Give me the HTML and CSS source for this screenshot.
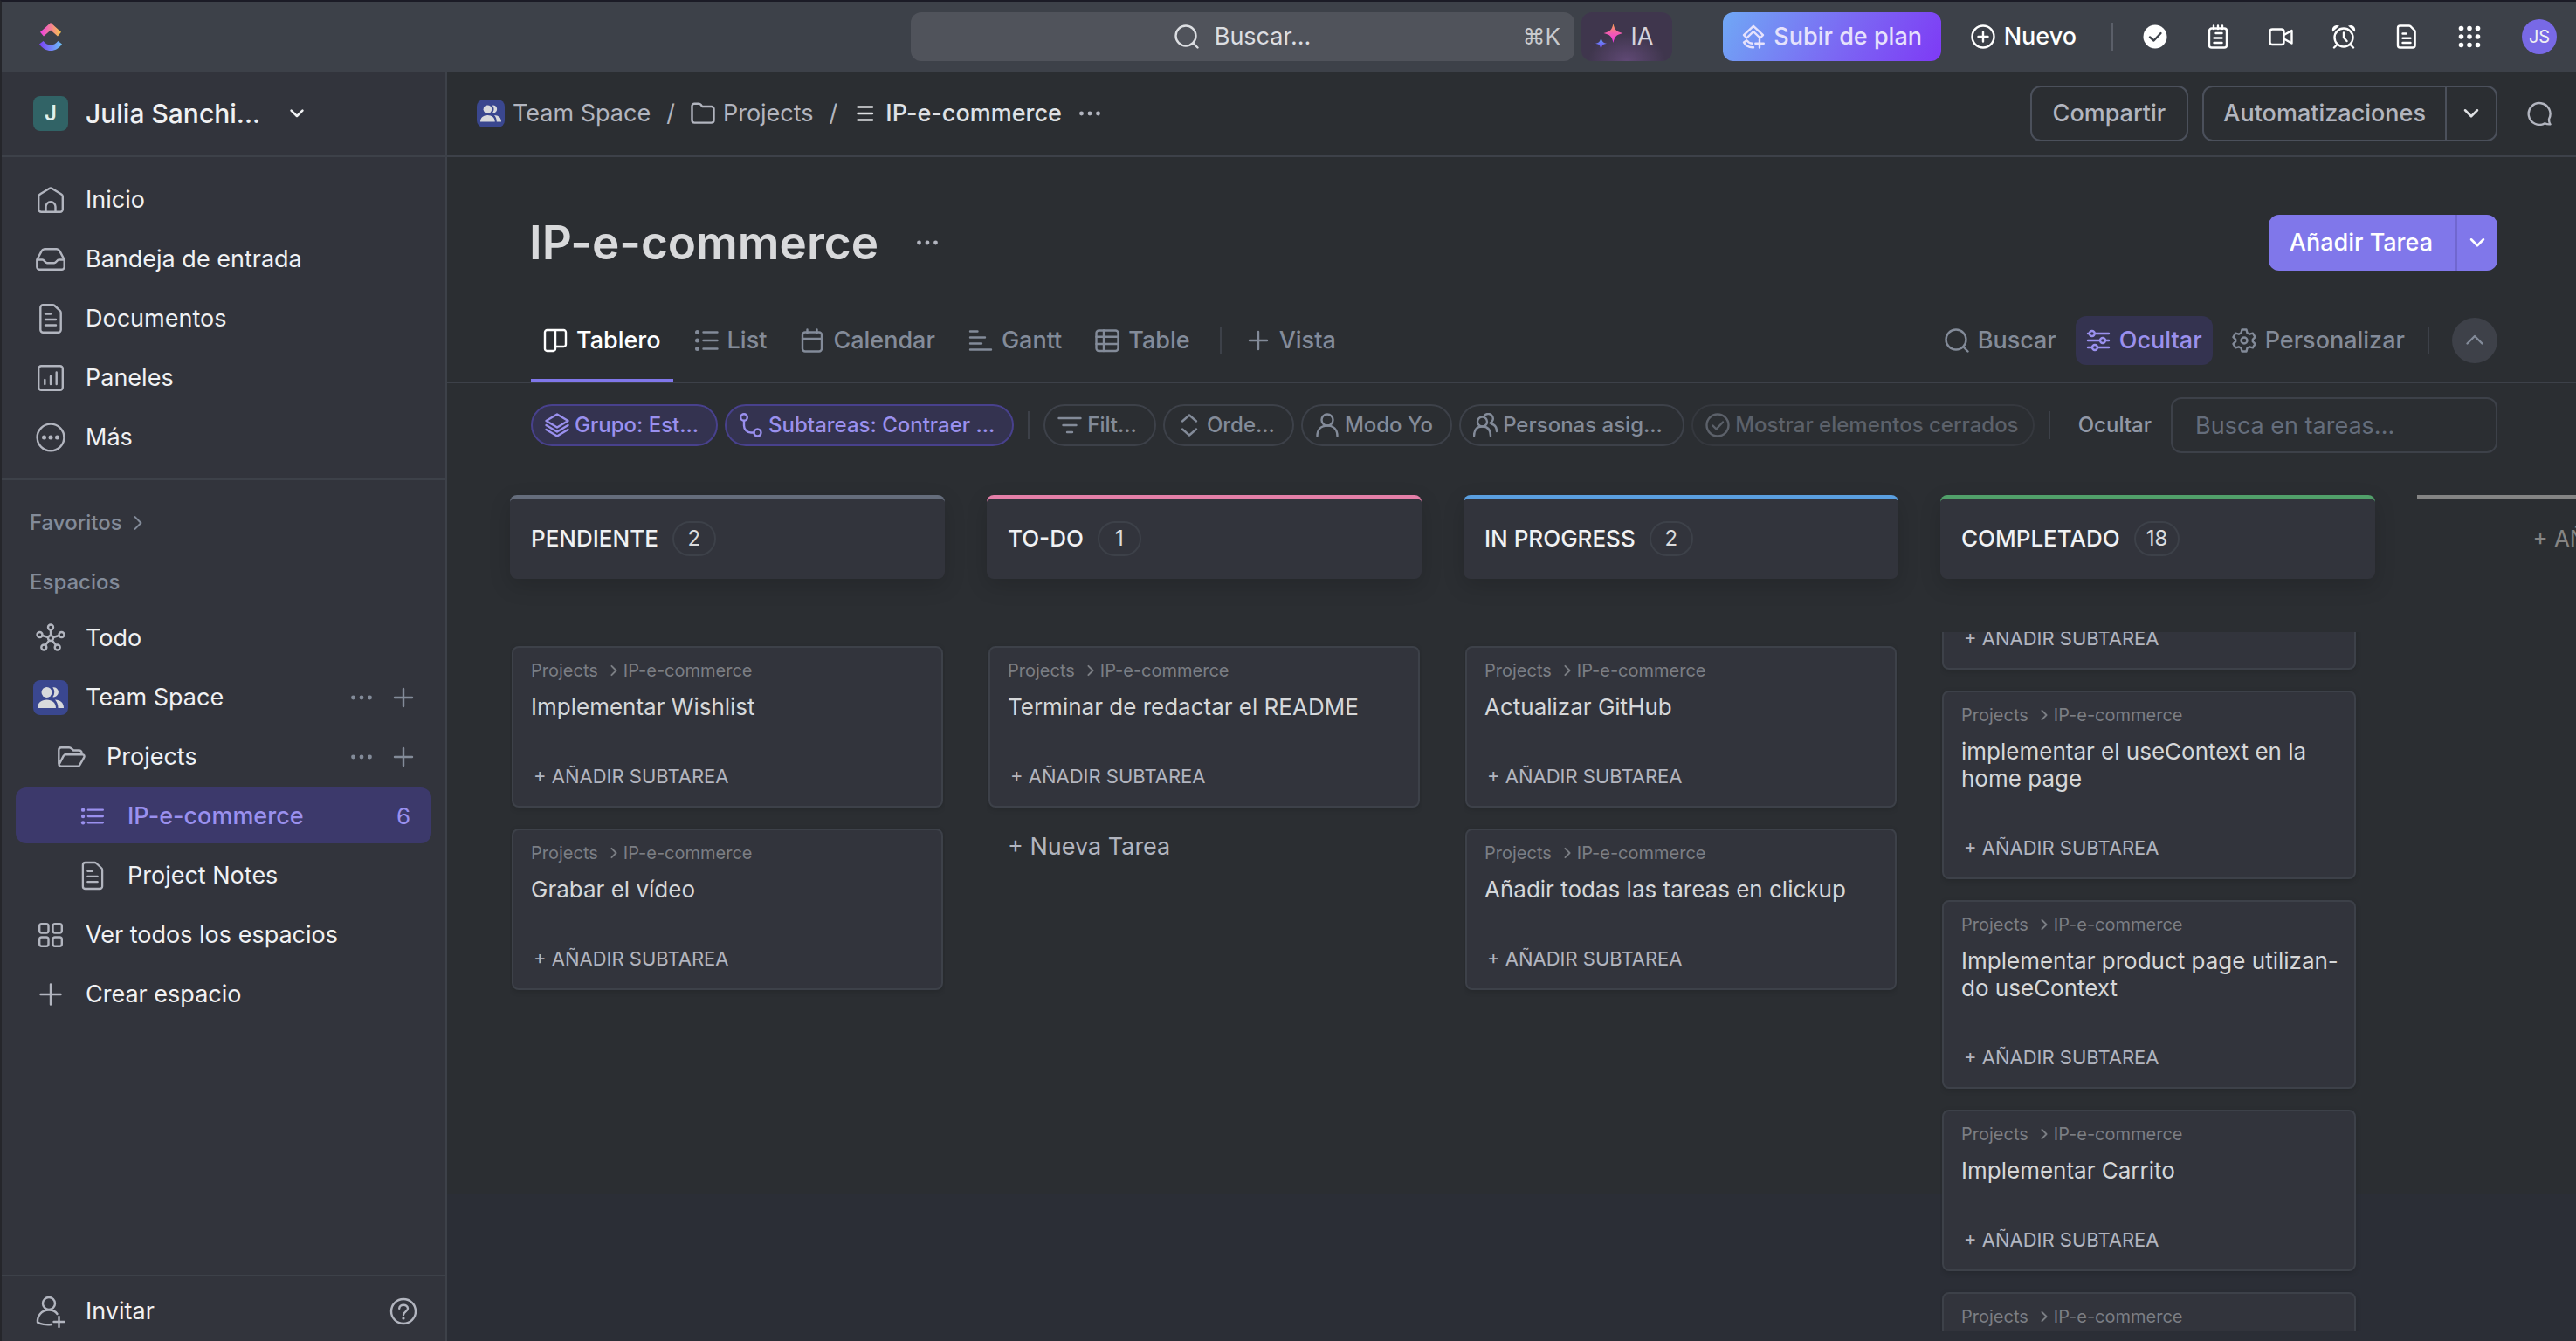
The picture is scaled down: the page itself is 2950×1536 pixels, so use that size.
FILE: index.html
```html
<!DOCTYPE html>
<html lang="es">
<head>
<meta charset="utf-8">
<meta name="viewport" content="width=device-width, initial-scale=1">
<title>IP-e-commerce</title>
<link rel="stylesheet" href="styles.css">
</head>
<body>
<svg class="sprite" aria-hidden="true">
  <defs>
    <linearGradient id="warm-flat" x1="0" y1="0" x2="1" y2="0"><stop offset="0" stop-color="#ee3ee4"/><stop offset=".55" stop-color="#f5868c"/><stop offset="1" stop-color="#f7ca4a"/></linearGradient>
    <linearGradient id="cool" x1="0" y1="0" x2="1" y2="0"><stop offset="0" stop-color="#7b3ff5"/><stop offset="1" stop-color="#6cc3f8"/></linearGradient>
    <linearGradient id="star-warm" x1="0" y1="1" x2="0" y2="0"><stop offset="0" stop-color="#ee35e6"/><stop offset=".5" stop-color="#f25cb0"/><stop offset="1" stop-color="#fba54a"/></linearGradient>
    <linearGradient id="star-cool" x1="0" y1="1" x2="0" y2="0"><stop offset="0" stop-color="#7b3ff5"/><stop offset="1" stop-color="#5fa8f5"/></linearGradient>
  </defs>
  <symbol id="i-home" viewBox="0 0 40 40"><path d="M6.2 16.2a3 3 0 0 1 1.5-2.6L18.4 6.9a3 3 0 0 1 3.2 0l10.7 6.7a3 3 0 0 1 1.5 2.6v14.6a3 3 0 0 1-3 3H9.2a3 3 0 0 1-3-3zM14.5 33.8v-6a5.5 5.5 0 0 1 11 0v6"/></symbol>
  <symbol id="i-inbox" viewBox="0 0 40 40"><path d="M4.3 20.5 9.6 10.6A4 4 0 0 1 13 8.2h14a4 4 0 0 1 3.4 2.4l5.3 9.9v8.3a3 3 0 0 1-3 3H7.3a3 3 0 0 1-3-3zM4.3 20.5h6.2c2.4 0 2.8 3.8 5.4 3.8h8.2c2.6 0 3-3.8 5.4-3.8h6.2"/></symbol>
  <symbol id="i-doc" viewBox="0 0 40 40"><path d="M11.3 4.2h11.1a3 3 0 0 1 2 .8l6.3 5.8a3 3 0 0 1 1 2.2v19.8a3 3 0 0 1-3 3H11.3a3 3 0 0 1-3-3V7.2a3 3 0 0 1 3-3zM14 14.5h6M14 21h12M14 27.5h12"/></symbol>
  <symbol id="i-panels" viewBox="0 0 40 40"><rect x="6.2" y="6.2" width="27.6" height="27.6" rx="3"/><path d="M13.3 22v5M20 18v9M26.7 13.5V27"/></symbol>
  <symbol id="i-more" viewBox="0 0 40 40"><circle cx="20" cy="20" r="15.4"/><g class="solid"><circle cx="12.5" cy="20" r="2.5"/><circle cx="20" cy="20" r="2.5"/><circle cx="27.5" cy="20" r="2.5"/></g></symbol>
  <symbol id="i-hub" viewBox="0 0 40 40"><circle cx="20" cy="20" r="3"/><circle cx="20" cy="7.5" r="3"/><circle cx="7.5" cy="16" r="3"/><circle cx="32.5" cy="16" r="3"/><circle cx="12.3" cy="30.5" r="3"/><circle cx="27.7" cy="30.5" r="3"/><path d="M20 10.5V17M10.4 17l6.700 2M29.6 17l-6.700 2M14 28l4.300-5.500M26 28l-4.300-5.500"/></symbol>
  <symbol id="i-people" viewBox="0 0 40 40"><circle cx="15.5" cy="14" r="6"/><path d="M5 32c0-6 4.500-9.500 10.500-9.500S26 26 26 32zM22.300 8.300a5.600 5.600 0 1 1 0 11 8.800 8.800 0 0 0 0-11zM25 22.500c6 0 10 3.500 10 9.500h-6.500c0-4-1.300-7-3.500-9.500z"/></symbol>
  <symbol id="i-folder-open" viewBox="0 0 40 40"><path d="M5.300 27.500V12a2.800 2.800 0 0 1 2.800-2.800h9c1.200 0 2 .5 3 1.500l2 1.800h6.500a3 3 0 0 1 3 3v1.700M5.500 28.800l5.200-9.900a3 3 0 0 1 2.700-1.700h19c1.600 0 2.700 1.700 1.900 3.100l-5 8.900a3 3 0 0 1-2.600 1.600H8.300a2.800 2.800 0 0 1-2.800-2z"/></symbol>
  <symbol id="i-list" viewBox="0 0 40 40"><path d="M14.5 12.300h18M14.5 20h18M14.5 27.700h18"/><g class="solid"><circle cx="8.500" cy="12.300" r="2.300"/><circle cx="8.500" cy="20" r="2.300"/><circle cx="8.500" cy="27.700" r="2.300"/></g></symbol>
  <symbol id="i-grid" viewBox="0 0 40 40"><rect x="7.200" y="7.200" width="10.300" height="10.300" rx="2.500"/><rect x="22.500" y="7.200" width="10.300" height="10.300" rx="2.500"/><rect x="7.200" y="22.500" width="10.300" height="10.300" rx="2.500"/><rect x="22.500" y="22.500" width="10.300" height="10.300" rx="2.500"/></symbol>
  <symbol id="i-plus" viewBox="0 0 40 40"><path d="M20 8.500v23M8.500 20h23"/></symbol>
  <symbol id="i-plus-sm" viewBox="0 0 28 28"><path d="M14 4v20M4 14h20"/></symbol>
  <symbol id="i-dots" viewBox="0 0 28 28"><g class="solid"><circle cx="4.500" cy="14" r="2.400"/><circle cx="14" cy="14" r="2.400"/><circle cx="23.500" cy="14" r="2.400"/></g></symbol>
  <symbol id="i-invite" viewBox="0 0 40 40"><circle cx="18" cy="11" r="7"/><path d="M21 35c-6 .8-13.500-.3-16-2.500C4.500 26 9 18.500 18 18.500c4.500 0 7.500 1.500 9.500 4.500M29.500 26v12M23.500 32h12"/></symbol>
  <symbol id="i-help" viewBox="0 0 40 40"><circle cx="20" cy="20" r="14"/><path d="M15.200 16.800c0-5.500 9.800-5.500 9.800 0 0 3.400-5 3.700-5 7.200"/><circle class="solid" cx="20" cy="28" r="1.600"/></symbol>
  <symbol id="i-down" viewBox="0 0 28 28"><path d="m6.500 10 7.500 7.500 7.500-7.500"/></symbol>
  <symbol id="i-up" viewBox="0 0 28 28"><path d="m5.500 17.500 8.500-8.500 8.500 8.500"/></symbol>
  <symbol id="i-right" viewBox="0 0 28 28"><path d="m10 6 8 8-8 8"/></symbol>
  <symbol id="i-search" viewBox="0 0 28 28"><circle cx="13" cy="13" r="11.500"/><path d="m21.500 21.500 5 5"/></symbol>
  <symbol id="i-upgrade" viewBox="0 0 28 28"><path d="M3 12.200 14 1.800l11 10.400-3.300 3.300L14 8.200l-7.700 7.300zM14 26.200C9 26.500 5 24.200 3 20.500l3.300-2.300c1.300 2 3.500 3.300 6.200 3.600M21 17v9.500M16.300 21.700h9.500"/></symbol>
  <symbol id="i-plus-circle" viewBox="0 0 28 28"><circle cx="14" cy="14" r="12.500"/><path d="M14 8.500v11M8.500 14h11"/></symbol>
  <symbol id="i-done" viewBox="0 0 28 28"><circle class="solid" cx="14" cy="14" r="13.500"/><path class="cut" d="m8 14.500 4.500 4L20.500 10"/></symbol>
  <symbol id="i-notepad" viewBox="0 0 28 28"><rect x="4" y="4.500" width="20" height="22" rx="2.800"/><path d="M9 1.500V5M14 1.500V5M19 1.500V5M11.500 10h7M9.500 15.500h9M9.500 21h9"/></symbol>
  <symbol id="i-video" viewBox="0 0 28 28"><rect x="1.500" y="5.500" width="16" height="17.500" rx="2.800"/><path d="M18.500 11.500 26.500 7v14.500l-8-4.500"/></symbol>
  <symbol id="i-alarm" viewBox="0 0 28 28"><circle cx="14" cy="15" r="10.500"/><path d="M14 9.500v5.500l3.500 4M6 23.500l-3 3M22 23.500l3 3"/><path class="solid" d="M1.200 8.500C-.5 3 4-.500 9 1.500zM26.800 8.500C28.500 3 24-.500 19 1.500z"/></symbol>
  <symbol id="i-doc-sm" viewBox="0 0 28 28"><path d="M6.500 1.500h10.300a2.500 2.500 0 0 1 1.700.7l4.300 4.300a2.500 2.500 0 0 1 .8 1.800V24a2.500 2.500 0 0 1-2.500 2.500H6.500A2.500 2.500 0 0 1 4 24V4a2.500 2.500 0 0 1 2.500-2.500zM9.500 10.500h4M9.500 15.800h9M9.500 21h9"/></symbol>
  <symbol id="i-apps" viewBox="0 0 28 28"><g class="solid"><circle cx="4.500" cy="4.500" r="2.800"/><circle cx="14" cy="4.500" r="2.800"/><circle cx="23.500" cy="4.500" r="2.800"/><circle cx="4.500" cy="14" r="2.800"/><circle cx="14" cy="14" r="2.800"/><circle cx="23.500" cy="14" r="2.800"/><circle cx="4.500" cy="23.500" r="2.800"/><circle cx="14" cy="23.500" r="2.800"/><circle cx="23.500" cy="23.500" r="2.800"/></g></symbol>
  <symbol id="i-chat" viewBox="0 0 28 28"><path d="M26.500 26.300c-2.300.2-4.400-.2-6.200-1.100a12.400 12.400 0 1 1 4.800-5c-.3 2.300.2 4.300 1.400 6.100z"/></symbol>
  <symbol id="i-folder" viewBox="0 0 28 28"><path d="M1.500 5.500a2.800 2.800 0 0 1 2.800-2.800h5c1 0 1.600.4 2.200 1.100L13.200 6h10.500a2.800 2.800 0 0 1 2.800 2.800v13a2.800 2.800 0 0 1-2.800 2.800H4.300a2.800 2.800 0 0 1-2.800-2.800z"/></symbol>
  <symbol id="i-lines" viewBox="0 0 28 28"><path d="M5.500 6.500h16.500M5.500 14h16.500M5.500 21.500h16.500"/></symbol>
  <symbol id="i-board" viewBox="0 0 28 28"><path d="M4.500 2h19A2.500 2.500 0 0 1 26 4.500v14a2.500 2.500 0 0 1-2.500 2.500H14v2.500a2.500 2.500 0 0 1-2.500 2.500h-7A2.500 2.500 0 0 1 2 23.500v-19A2.500 2.500 0 0 1 4.500 2zM14 2v19"/></symbol>
  <symbol id="i-list-lg" viewBox="0 0 28 28"><path d="M10.500 4.500h16M10.500 14h16M10.500 23.500h16"/><g class="solid"><circle cx="3.500" cy="4.500" r="2.500"/><circle cx="3.500" cy="14" r="2.500"/><circle cx="3.500" cy="23.500" r="2.500"/></g></symbol>
  <symbol id="i-calendar" viewBox="0 0 28 28"><rect x="3" y="4.500" width="22" height="22" rx="3"/><path d="M3 12h22M8.500 1.500v4M19.500 1.500v4"/></symbol>
  <symbol id="i-gantt" viewBox="0 0 28 28"><path d="M2 3.500h8.500M2 10.500h17M2 17.500h13M2 24.500h24"/></symbol>
  <symbol id="i-table" viewBox="0 0 28 28"><rect x="1.500" y="2.500" width="25" height="23.500" rx="3"/><path d="M1.500 9.800h25M1.500 18h25M10 2.500V26"/></symbol>
  <symbol id="i-tune" viewBox="0 0 28 28"><path d="M11 6h15M2 6h1.500M2 14h13M23 14h3M2 22h4.500M14 22h12"/><circle cx="6.800" cy="6" r="3"/><circle cx="19" cy="14" r="3"/><circle cx="10" cy="22" r="3"/></symbol>
  <symbol id="i-gear" viewBox="0 0 28 28"><path d="M11.500 1.500h5l1 3.700 2.700 1.500 3.700-1 2.600 4.400-2.700 2.700v2.400l2.700 2.700-2.600 4.400-3.700-1-2.700 1.500-1 3.700h-5l-1-3.700-2.700-1.500-3.700 1-2.600-4.400 2.700-2.700v-2.400L1.500 10.100l2.600-4.400 3.700 1 2.700-1.500z"/><circle cx="14" cy="14" r="3.500"/></symbol>
  <symbol id="i-layers" viewBox="0 0 28 28"><path d="M14 1.500 26.500 9 14 16.500 1.500 9zM1.500 14 14 21.500 26.500 14M1.500 19 14 26.500 26.500 19"/></symbol>
  <symbol id="i-branch" viewBox="0 0 28 28"><circle cx="6" cy="5" r="3.800"/><circle cx="21.500" cy="22.500" r="4"/><path d="M6 9v5.500a8 8 0 0 0 8 8h3.500"/></symbol>
  <symbol id="i-filter" viewBox="0 0 28 28"><path d="M1.500 6h25M6.500 14h15M11 22h6"/></symbol>
  <symbol id="i-sort" viewBox="0 0 28 28"><path d="m6 9.500 8-7 8 7M6 18.500l8 7 8-7"/></symbol>
  <symbol id="i-user" viewBox="0 0 28 28"><circle cx="14" cy="8" r="6.500"/><path d="M2.500 26.500c0-7.500 4.500-12 11.500-12s11.500 4.500 11.500 12"/></symbol>
  <symbol id="i-users" viewBox="0 0 28 28"><circle cx="10.500" cy="10" r="5.500"/><path d="M1 26.500c0-7 3.500-11 9.500-11s9.500 4 9.500 11M13 3a5.500 5.500 0 1 1 6.500 8.500M21 12.500c4 1 6 3.800 6 8.500"/></symbol>
  <symbol id="i-check-circle" viewBox="0 0 28 28"><circle cx="14" cy="14" r="12.500"/><path d="m8.500 14.500 4 4 7.500-8"/></symbol>
</svg>

<div class="app">
  <header class="topbar">
    <a class="logo" href="#" aria-label="ClickUp"><svg viewBox="0 0 26 32"><path fill="url(#warm-flat)" d="M13 0 1 10.800l4 4.700 8-7 8 7 4-4.700z"/><path fill="url(#cool)" d="M0 24.500 4.600 21c4.900 6 11.900 6 16.800 0l4.600 3.500c-7 10-19 10-26 0z"/></svg></a>
    <div class="topbar-center">
      <button class="search" type="button"><span class="search-label"><svg class="icon"><use href="#i-search"/></svg>Buscar...</span><kbd>⌘K</kbd></button>
      <button class="ai" type="button"><svg viewBox="0 0 32 32"><path fill="url(#star-warm)" d="M20.500 1c1.600 7.200 3.400 9.400 11 11-7.600 1.600-9.400 3.800-11 11-1.600-7.200-3.400-9.400-11-11 7.600-1.600 9.400-3.800 11-11z"/><path fill="url(#star-cool)" d="M6.500 17c1 4.500 2 5.800 6.500 6.800-4.500 1-5.500 2.200-6.500 6.700-1-4.500-2-5.700-6.500-6.700 4.500-1 5.500-2.300 6.500-6.800z"/></svg>IA</button>
    </div>
    <div class="topbar-end">
      <button class="upgrade" type="button"><svg class="icon"><use href="#i-upgrade"/></svg>Subir de plan</button>
      <button class="new" type="button"><svg class="icon"><use href="#i-plus-circle"/></svg>Nuevo</button>
      <span class="rule"></span>
      <nav class="tools" aria-label="Herramientas">
        <button type="button" aria-label="Hecho"><svg class="icon"><use href="#i-done"/></svg></button>
        <button type="button" aria-label="Bloc de notas"><svg class="icon"><use href="#i-notepad"/></svg></button>
        <button type="button" aria-label="Vídeo"><svg class="icon"><use href="#i-video"/></svg></button>
        <button type="button" aria-label="Recordatorio"><svg class="icon"><use href="#i-alarm"/></svg></button>
        <button type="button" aria-label="Documento"><svg class="icon"><use href="#i-doc-sm"/></svg></button>
        <button type="button" aria-label="Aplicaciones"><svg class="icon"><use href="#i-apps"/></svg></button>
      </nav>
      <button class="avatar" type="button">JS</button>
    </div>
  </header>

  <aside class="sidebar">
    <button class="workspace" type="button"><span class="badge">J</span><span>Julia Sanchi...</span><svg class="icon"><use href="#i-down"/></svg></button>
    <nav class="group" aria-label="Principal">
      <a class="row" href="#"><svg class="glyph"><use href="#i-home"/></svg>Inicio</a>
      <a class="row" href="#"><svg class="glyph"><use href="#i-inbox"/></svg>Bandeja de entrada</a>
      <a class="row" href="#"><svg class="glyph"><use href="#i-doc"/></svg>Documentos</a>
      <a class="row" href="#"><svg class="glyph"><use href="#i-panels"/></svg>Paneles</a>
      <a class="row" href="#"><svg class="glyph"><use href="#i-more"/></svg>Más</a>
    </nav>
    <nav class="group spaces" aria-label="Espacios">
      <button class="heading" type="button">Favoritos<svg class="icon"><use href="#i-right"/></svg></button>
      <div class="tree">
        <h2 class="heading">Espacios</h2>
        <a class="row" href="#"><svg class="glyph"><use href="#i-hub"/></svg>Todo</a>
        <div class="row"><svg class="team"><use href="#i-people"/></svg><a class="name" href="#">Team Space</a><button type="button" aria-label="Opciones de Team Space"><svg class="icon"><use href="#i-dots"/></svg></button><button type="button" aria-label="Añadir a Team Space"><svg class="icon"><use href="#i-plus-sm"/></svg></button></div>
        <div class="row level-1"><svg class="glyph"><use href="#i-folder-open"/></svg><a class="name" href="#">Projects</a><button type="button" aria-label="Opciones de Projects"><svg class="icon"><use href="#i-dots"/></svg></button><button type="button" aria-label="Añadir a Projects"><svg class="icon"><use href="#i-plus-sm"/></svg></button></div>
        <a class="row level-2 current" href="#"><svg class="glyph"><use href="#i-list"/></svg><span class="name">IP-e-commerce</span><span class="count">6</span></a>
        <a class="row level-2" href="#"><svg class="glyph"><use href="#i-doc"/></svg>Project Notes</a>
        <a class="row" href="#"><svg class="glyph"><use href="#i-grid"/></svg>Ver todos los espacios</a>
        <a class="row" href="#"><svg class="glyph"><use href="#i-plus"/></svg>Crear espacio</a>
      </div>
    </nav>
    <footer class="sidebar-foot">
      <div class="row"><svg class="glyph"><use href="#i-invite"/></svg><a class="name" href="#">Invitar</a><button type="button" aria-label="Ayuda"><svg class="glyph"><use href="#i-help"/></svg></button></div>
    </footer>
  </aside>

  <main class="main">
    <div class="crumb-bar">
      <nav class="crumbs" aria-label="Ruta">
        <a href="#"><svg class="team"><use href="#i-people"/></svg>Team Space</a><span>/</span>
        <a href="#"><svg class="icon"><use href="#i-folder"/></svg>Projects</a><span>/</span>
        <a class="here" href="#"><svg class="icon"><use href="#i-lines"/></svg>IP-e-commerce</a>
        <button type="button" aria-label="Más opciones"><svg class="icon"><use href="#i-dots"/></svg></button>
      </nav>
      <button class="outline" type="button">Compartir</button>
      <div class="outline split"><button type="button">Automatizaciones</button><button type="button" aria-label="Más automatizaciones"><svg class="icon"><use href="#i-down"/></svg></button></div>
      <button class="chat" type="button" aria-label="Chat"><svg class="icon"><use href="#i-chat"/></svg></button>
    </div>

    <div class="title-bar">
      <h1>IP-e-commerce</h1>
      <button type="button" aria-label="Opciones de la lista"><svg class="icon"><use href="#i-dots"/></svg></button>
      <div class="primary split"><button type="button">Añadir Tarea</button><button type="button" aria-label="Más formas de añadir"><svg class="icon"><use href="#i-down"/></svg></button></div>
    </div>

    <div class="view-bar">
      <nav class="tabs" aria-label="Vistas">
        <a class="active" href="#"><svg class="icon"><use href="#i-board"/></svg>Tablero</a>
        <a href="#"><svg class="icon"><use href="#i-list-lg"/></svg>List</a>
        <a href="#"><svg class="icon"><use href="#i-calendar"/></svg>Calendar</a>
        <a href="#"><svg class="icon"><use href="#i-gantt"/></svg>Gantt</a>
        <a href="#"><svg class="icon"><use href="#i-table"/></svg>Table</a>
        <span class="rule"></span>
        <a href="#"><svg class="icon"><use href="#i-plus-sm"/></svg>Vista</a>
      </nav>
      <div class="view-actions">
        <button type="button"><svg class="icon"><use href="#i-search"/></svg>Buscar</button>
        <button class="on" type="button"><svg class="icon"><use href="#i-tune"/></svg>Ocultar</button>
        <button type="button"><svg class="icon"><use href="#i-gear"/></svg>Personalizar</button>
        <span class="rule"></span>
        <button class="collapse" type="button" aria-label="Contraer"><svg class="icon"><use href="#i-up"/></svg></button>
      </div>
    </div>

    <div class="filter-bar">
      <button class="pill on" type="button"><svg class="icon"><use href="#i-layers"/></svg>Grupo: Est...</button>
      <button class="pill on" type="button"><svg class="icon"><use href="#i-branch"/></svg>Subtareas: Contraer ...</button>
      <span class="rule"></span>
      <button class="pill" type="button"><svg class="icon"><use href="#i-filter"/></svg>Filt...</button>
      <button class="pill" type="button"><svg class="icon"><use href="#i-sort"/></svg>Orde...</button>
      <button class="pill" type="button"><svg class="icon"><use href="#i-user"/></svg>Modo Yo</button>
      <button class="pill assignees" type="button"><svg class="icon"><use href="#i-users"/></svg>Personas asig...</button>
      <button class="pill faded" type="button"><svg class="icon"><use href="#i-check-circle"/></svg>Mostrar elementos cerrados</button>
      <span class="rule"></span>
      <button class="hide" type="button">Ocultar</button>
      <input type="search" aria-label="Busca en tareas" placeholder="Busca en tareas...">
    </div>

    <div class="board">
      <section class="column">
        <header class="column-head grey"><h2>PENDIENTE</h2><span>2</span></header>
        <div class="cards">
          <article class="card"><p>Projects<svg class="icon"><use href="#i-right"/></svg>IP-e-commerce</p><h3>Implementar Wishlist</h3><button type="button">+ AÑADIR SUBTAREA</button></article>
          <article class="card"><p>Projects<svg class="icon"><use href="#i-right"/></svg>IP-e-commerce</p><h3>Grabar el vídeo</h3><button type="button">+ AÑADIR SUBTAREA</button></article>
        </div>
      </section>
      <section class="column">
        <header class="column-head pink"><h2>TO-DO</h2><span>1</span></header>
        <div class="cards">
          <article class="card"><p>Projects<svg class="icon"><use href="#i-right"/></svg>IP-e-commerce</p><h3>Terminar de redactar el README</h3><button type="button">+ AÑADIR SUBTAREA</button></article>
          <button class="new-task" type="button">+ Nueva Tarea</button>
        </div>
      </section>
      <section class="column">
        <header class="column-head blue"><h2>IN PROGRESS</h2><span>2</span></header>
        <div class="cards">
          <article class="card"><p>Projects<svg class="icon"><use href="#i-right"/></svg>IP-e-commerce</p><h3>Actualizar GitHub</h3><button type="button">+ AÑADIR SUBTAREA</button></article>
          <article class="card"><p>Projects<svg class="icon"><use href="#i-right"/></svg>IP-e-commerce</p><h3>Añadir todas las tareas en clickup</h3><button type="button">+ AÑADIR SUBTAREA</button></article>
        </div>
      </section>
      <section class="column">
        <header class="column-head green"><h2>COMPLETADO</h2><span>18</span></header>
        <div class="cards long" data-scroll="158">
          <article class="card"><p></p><h3></h3><button type="button">+ AÑADIR SUBTAREA</button></article>
          <article class="card"><p>Projects<svg class="icon"><use href="#i-right"/></svg>IP-e-commerce</p><h3>implementar el useContext en la<br>home page</h3><button type="button">+ AÑADIR SUBTAREA</button></article>
          <article class="card"><p>Projects<svg class="icon"><use href="#i-right"/></svg>IP-e-commerce</p><h3>Implementar product page utilizan-<br>do useContext</h3><button type="button">+ AÑADIR SUBTAREA</button></article>
          <article class="card"><p>Projects<svg class="icon"><use href="#i-right"/></svg>IP-e-commerce</p><h3>Implementar Carrito</h3><button type="button">+ AÑADIR SUBTAREA</button></article>
          <article class="card"><p>Projects<svg class="icon"><use href="#i-right"/></svg>IP-e-commerce</p><h3></h3></article>
        </div>
      </section>
      <section class="column">
        <button class="add-status" type="button">+ AÑADIR ESTADO</button>
      </section>
    </div>
  </main>
</div>
<script src="board.js"></script>
</body>
</html>
```
FILE: board.js
```js
document.querySelectorAll("[data-scroll]").forEach(function (list) {
  list.scrollTop = Number(list.dataset.scroll);
});
```
FILE: styles.css
```css
:root {
  --line: #3d4149;
  --panel: #32343c;
  --bg: #2b2e32;
  --muted: #838b99;
  --soft: #b2b5bf;
  --text: #f0f1f3;
  --accent: #8077ea;
  --accent-text: #9a90ee;
  --accent-bg: #343350;
}

* { box-sizing: border-box; }

body {
  margin: 0;
  border-top: 2px solid #1b1b26;
  border-left: 2px solid #25262b;
  background: var(--bg);
  color: var(--text);
  font: 400 27px/32px Inter, "Liberation Sans", sans-serif;
}

button, input { font: inherit; color: inherit; }
button { display: inline-flex; align-items: center; justify-content: center; padding: 0; border: 0; background: none; white-space: nowrap; cursor: pointer; }
a { color: inherit; text-decoration: none; }
h1, h2, h3, p { margin: 0; }

.sprite { display: block; width: 0; height: 0; }
svg { flex: none; fill: none; stroke-linecap: round; stroke-linejoin: round; }
.icon { width: 28px; height: 28px; stroke: currentColor; stroke-width: 2.4; }
.glyph { width: 40px; height: 40px; stroke: var(--soft); color: var(--soft); stroke-width: 2.4; }
.solid { fill: currentColor; stroke: none; }
.cut { stroke: var(--line); }
.team { width: 40px; height: 40px; border-radius: 8px; background: #3a478f; fill: #d8dadc; }
.rule { flex: none; width: 2px; height: 32px; background: var(--line); }

.app {
  display: grid;
  grid-template: 80px minmax(0, 1fr) / 510px minmax(0, 1fr);
  height: calc(100vh - 2px);
}

/* Top bar */
.topbar {
  grid-column: 1 / -1;
  display: grid;
  grid-template-columns: 1fr auto 1fr;
  align-items: center;
  padding: 0 22px 0 28px;
  background: var(--line);
}
.logo { display: flex; justify-content: center; width: 56px; }
.logo svg { width: 26px; height: 32px; }
.topbar-center, .topbar-end, .tools { display: flex; align-items: center; }
.topbar-center { gap: 8px; }
.search {
  display: grid;
  grid-template-columns: 1fr auto 1fr;
  width: 760px;
  height: 56px;
  padding: 0 16px;
  border-radius: 12px;
  background: #50535b;
  color: #dcdee2;
}
.search-label { grid-column: 2; display: flex; align-items: center; gap: 18px; }
.search kbd { justify-self: end; font: inherit; font-size: 26px; color: #c8cace; }
.ai {
  gap: 9px;
  width: 104px;
  height: 56px;
  padding-right: 6px;
  border-radius: 12px;
  background: radial-gradient(44px 32px at 50% 100%, #604975, #3f364d);
  color: #d6d3dc;
}
.ai svg { width: 32px; height: 32px; }
.topbar-end { justify-content: flex-end; }
.upgrade {
  gap: 9px;
  width: 250px;
  height: 56px;
  border-radius: 12px;
  background: linear-gradient(120deg, #70a8f5, #7b68f3 55%, #7e3af5);
  color: #e6e2fc;
  font-weight: 500;
}
.new { gap: 10px; padding: 0 40px 0 34px; color: #fff; font-weight: 500; }
.topbar .rule { margin-right: 12px; background: #5b5f69; }
.tools button { width: 72px; height: 56px; color: #fff; }
.avatar { width: 40px; height: 40px; margin-left: 24px; border-radius: 50%; background: #7869e6; font-size: 20px; }

/* Sidebar */
.sidebar { display: flex; flex-direction: column; border-right: 2px solid var(--line); background: var(--panel); }
.workspace {
  justify-content: flex-start;
  gap: 20px;
  height: 98px;
  padding-left: 36px;
  border-bottom: 2px solid var(--line);
  font-size: 30px;
  font-weight: 500;
}
.workspace .icon { width: 24px; height: 24px; margin-left: 10px; stroke-width: 3; }
.badge { width: 40px; height: 40px; border-radius: 8px; background: #316366; color: #dff0ee; font-size: 24px; font-weight: 600; line-height: 40px; }
.group { display: flex; flex-direction: column; gap: 4px; padding: 16px; }
.spaces { flex: 1; border-top: 2px solid var(--line); }
.heading { display: flex; justify-content: flex-start; align-items: center; gap: 6px; height: 64px; padding: 2px 0 0 16px; color: var(--muted); font-size: 24px; font-weight: 500; }
.heading .icon { width: 24px; height: 24px; }
.tree { display: flex; flex-direction: column; gap: 4px; }
.tree .heading { margin-bottom: -4px; }
.row { display: flex; align-items: center; gap: 20px; height: 64px; padding: 2px 18px 0 20px; border-radius: 12px; }
.name { flex: 1; }
.row button { width: 28px; height: 28px; color: var(--muted); }
.row button .glyph { margin: 0 -6px; }
.level-1 { padding-left: 44px; }
.level-2 { padding-left: 68px; }
.level-2 .glyph { padding: 1px; }
.current { background: #3c396b; color: var(--accent-text); font-weight: 500; }
.current .glyph { stroke: currentColor; color: inherit; }
.count { width: 28px; font-size: 26px; font-weight: 400; text-align: center; }
.sidebar-foot { padding: 7px 16px 3px; border-top: 2px solid var(--line); }

/* Breadcrumb bar */
.main {
  display: flex;
  flex-direction: column;
  min-width: 0;
  background: linear-gradient(to top, #2b2e36 168px, var(--bg) 168px);
}
.crumb-bar { display: flex; align-items: center; height: 98px; padding: 0 28px 0 34px; border-bottom: 2px solid var(--line); }
.crumbs { flex: 1; display: flex; align-items: center; gap: 18px; color: var(--soft); }
.crumbs a { display: flex; align-items: center; gap: 9px; }
.crumbs .team { width: 32px; height: 32px; }
.crumbs .here { color: #dfe1e4; font-weight: 500; }
.outline { height: 64px; border: 2px solid #4b505b; border-radius: 12px; color: var(--soft); font-weight: 500; }
button.outline { margin-right: 16px; padding: 0 24px; }
.split { display: flex; }
.split.outline button:first-child { padding: 0 22px; }
.split.outline button:last-child { width: 58px; border-left: 2px solid #4b505b; color: #dfe1e4; }
.split .icon { width: 26px; height: 26px; stroke-width: 2.8; }
.chat { margin-left: 34px; color: var(--soft); }

/* Title */
.title-bar { display: flex; align-items: center; padding: 66px 90px 0 94px; }
.title-bar h1 { color: #d8d9db; font-size: 53px; font-weight: 600; line-height: 62px; }
.title-bar > button { margin-left: 42px; color: var(--soft); }
.primary { height: 64px; margin-left: auto; border-radius: 12px; background: var(--accent); color: #fff; font-weight: 500; }
.primary button:first-child { padding: 0 26px 0 24px; }
.primary button:last-child { width: 48px; border-left: 2px solid #7067cf; }

/* View tabs */
.view-bar { display: flex; justify-content: space-between; height: 97px; margin-top: 32px; padding: 0 90px 0 96px; border-bottom: 2px solid var(--line); }
.tabs, .view-actions { display: flex; align-items: center; gap: 10px; color: var(--muted); font-weight: 500; }
.tabs a { display: flex; align-items: center; gap: 10px; height: 97px; padding: 4px 14px 0; border-bottom: 4px solid transparent; }
.tabs .active { border-bottom-color: var(--accent); color: #fff; }
.tabs .rule { margin: 0 4px 0 10px; }
.view-actions button { gap: 10px; height: 56px; padding: 0 12px; border-radius: 12px; }
.view-actions .on { background: var(--accent-bg); color: var(--accent-text); }
.view-actions .rule { margin: 0 16px 0 4px; }
.view-actions .collapse { width: 52px; height: 52px; border-radius: 50%; background: #3e4149; }

/* Filters */
.filter-bar { display: flex; align-items: center; gap: 8px; padding: 16px 90px 16px 96px; color: var(--muted); font-size: 24px; font-weight: 500; }
.pill { gap: 6px; height: 48px; padding: 0 20px 0 14px; border: 2px solid var(--line); border-radius: 24px; }
.pill.on { border-color: #48418d; background: var(--accent-bg); color: var(--accent-text); }
.pill.assignees { justify-content: flex-start; width: 258px; }
.pill.faded { padding-right: 16px; border-color: #35383e; color: #5c616a; }
.filter-bar .rule { margin: 0 8px; }
.hide { margin-left: auto; padding: 0 14px; color: #9298a6; }
.filter-bar input { width: 374px; height: 64px; padding: 0 26px; border: 2px solid var(--line); border-radius: 12px; background: none; font-size: 27px; font-weight: 400; }
.filter-bar input::placeholder { color: #656d7b; opacity: 1; }

/* Board */
.board { flex: 1; display: flex; gap: 48px; min-height: 0; padding: 32px 0 12px 72px; overflow: hidden; }
.column { flex: none; display: flex; flex-direction: column; gap: 61px; width: 498px; }
.column-head {
  display: flex;
  align-items: center;
  gap: 16px;
  height: 96px;
  padding: 0 24px;
  border-top: 4px solid;
  border-radius: 8px;
  background: var(--panel);
  box-shadow: 0 8px 24px rgba(0, 0, 0, .15);
}
.column-head h2 { color: var(--text); font-size: 26px; font-weight: 500; }
.column-head span { min-width: 50px; height: 40px; padding: 0 12px; border: 2px solid var(--line); border-radius: 20px; color: #dcdcdc; font-size: 24px; line-height: 36px; text-align: center; }
.column-head.grey { border-color: #656d7c; }
.column-head.pink { border-color: #e47fa8; }
.column-head.blue { border-color: #5a9fe0; }
.column-head.green { border-color: #51a06a; }
.cards { flex: 1; display: flex; flex-direction: column; gap: 24px; min-height: 0; padding: 16px 2px 0; overflow-y: auto; scrollbar-width: none; }
.cards.long { padding-right: 22px; }
.card { flex: none; padding: 10px 14px 14px 20px; border: 2px solid var(--line); border-radius: 8px; background: var(--panel); box-shadow: 0 2px 6px rgba(0, 0, 0, .15); }
.card p { display: flex; align-items: center; min-height: 32px; color: #7b7e84; font-size: 20px; }
.card p .icon { width: 18px; height: 18px; margin: 0 2px 0 9px; stroke-width: 3; }
.card h3 { min-height: 31px; margin-top: 10px; color: #d5d7d9; font-size: 26px; font-weight: 400; line-height: 31px; white-space: nowrap; }
.card button { height: 40px; margin: 44px 0 0 3px; color: var(--soft); font-size: 22px; }
.new-task { align-self: flex-start; height: 42px; padding-left: 22px; color: var(--soft); }
.add-status { width: 100%; height: 96px; border-top: 4px solid #848484; color: #858585; font-size: 26px; }
```
